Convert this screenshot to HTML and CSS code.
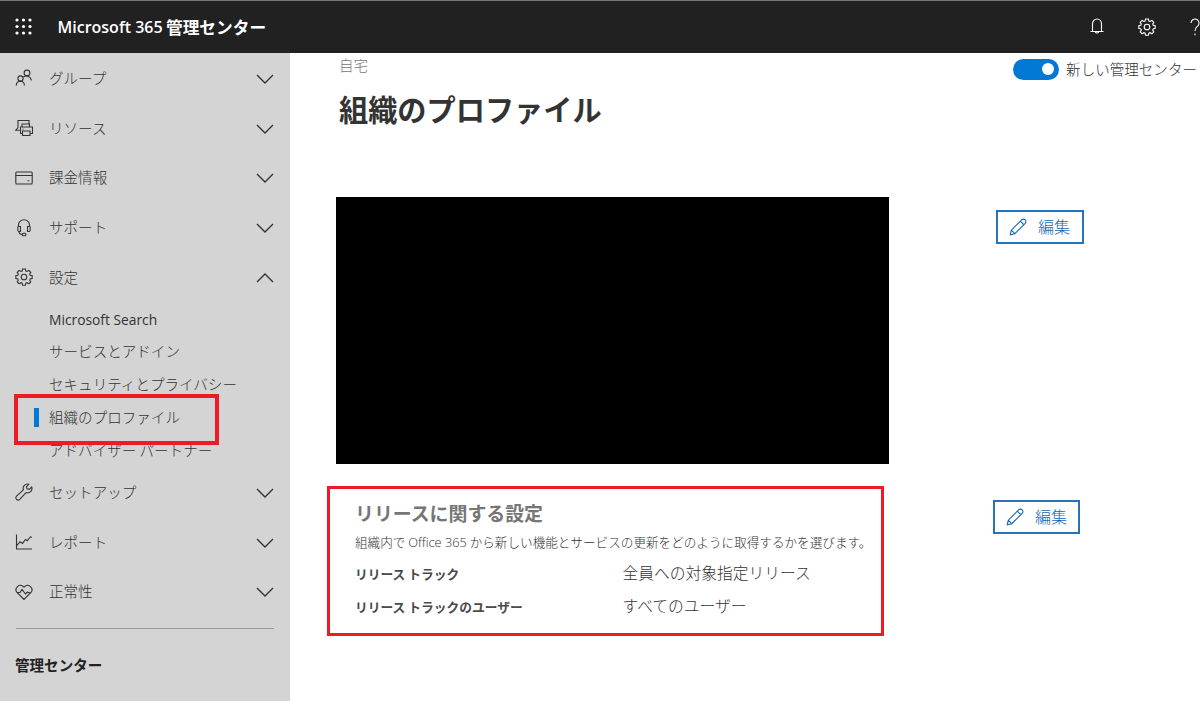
FILE: index.html
```html
<!DOCTYPE html>
<html lang="ja">
<head>
<meta charset="utf-8">
<title>Microsoft 365 管理センター</title>
<link rel="stylesheet" href="styles.css">
</head>
<body>
<svg width="0" height="0" class="defs">
  <defs>
    <symbol id="gear" viewBox="0 0 18 18"><path d="M7.6 1h2.8l.5 2 1.2.5 1.8-1.1 1.9 1.9-1.1 1.8.5 1.2 2 .5v2.6l-2 .5-.5 1.2 1.1 1.8-1.9 1.9-1.8-1.1-1.2.5-.5 2H7.6l-.5-2-1.2-.5-1.8 1.1-1.9-1.9 1.1-1.8-.5-1.2-2-.5V7.800l2-.5.5-1.200-1.100-1.800 1.900-1.900 1.800 1.100L7.100 3z"/><circle cx="9" cy="9" r="2.800"/></symbol>
    <symbol id="down" viewBox="0 0 18 10"><path d="M1 1l8 8 8-8"/></symbol>
    <symbol id="up" viewBox="0 0 18 10"><path d="M1 9l8-8 8 8"/></symbol>
    <symbol id="pencil" viewBox="0 0 18 18"><path d="M1.300 16.700l1-4.500L12.700 1.800a2.100 2.100 0 0 1 3.500 3.500L5.800 15.700zM2.300 12.200l3.500 3.500M11.300 3.200l3.500 3.500"/></symbol>
  </defs>
</svg>
<header class="topbar">
  <svg class="waffle" viewBox="0 0 17 17"><circle cx="2" cy="2" r="1.600"/><circle cx="8.500" cy="2" r="1.600"/><circle cx="15" cy="2" r="1.600"/><circle cx="2" cy="8.500" r="1.600"/><circle cx="8.500" cy="8.500" r="1.600"/><circle cx="15" cy="8.500" r="1.600"/><circle cx="2" cy="15" r="1.600"/><circle cx="8.500" cy="15" r="1.600"/><circle cx="15" cy="15" r="1.600"/></svg>
  <div class="brand"><span class="brand-latin">Microsoft 365</span><span>管理センター</span></div>
  <svg class="icon bell" viewBox="0 0 14 17"><path d="M.5 13.500h13M2.500 13.500V5.800a4.500 4.800 0 0 1 9 0v7.700M5.300 14a1.800 1.600 0 0 0 3.400 0"/></svg>
  <svg class="icon topgear"><use href="#gear"/></svg>
  <svg class="icon help" viewBox="0 0 10 18"><path d="M1 5a4 4 0 1 1 6.900 2.800C6.300 9.400 5 10.200 5 13M5 15.500v1.700"/></svg>
</header>
<div class="layout">
  <nav class="sidebar">
    <div class="row"><svg class="icon" viewBox="0 0 18 18"><circle cx="12" cy="4" r="2.900"/><circle cx="5.500" cy="9.500" r="2.600"/><path d="M1.300 16.500c0-5.700 8.100-5.700 8.100 0M8.300 8.100c2.200-2 7.400-1.400 8 3.400"/></svg><span>グループ</span><svg class="chev"><use href="#down"/></svg></div>
    <div class="row"><svg class="icon" viewBox="0 0 18 18"><path d="M3 8.500V1.500h11v3M3 8.500L.8 11.200h4M7 8V5h7.500v3M7 14.500H5.500V8h12v6.500h-2M7.500 12h7.500v4.500H7.500zM7.500 10.200h1"/></svg><span>リソース</span><svg class="chev"><use href="#down"/></svg></div>
    <div class="row"><svg class="icon" viewBox="0 0 18 18"><rect x=".8" y="3" width="16.400" height="12" rx="1"/><path d="M.8 6.500h16.400M12.500 11.800h1.800"/></svg><span>課金情報</span><svg class="chev"><use href="#down"/></svg></div>
    <div class="row"><svg class="icon" viewBox="0 0 18 18"><path d="M3.500 8V6a5.500 5.200 0 0 1 11 0v2M3.500 7.500h2v5H4.300a1.500 1.500 0 0 1-1.500-1.500V8zM14.500 7.500h-2v5h1.200a1.500 1.500 0 0 0 1.500-1.500V8zM4 12.500c0 2 1.200 3 3.500 3"/><rect x="7.300" y="14.300" width="3.600" height="2.400" rx="1"/></svg><span>サポート</span><svg class="chev"><use href="#down"/></svg></div>
    <div class="row"><svg class="icon"><use href="#gear"/></svg><span>設定</span><svg class="chev"><use href="#up"/></svg></div>
    <div class="subnav">
      <div class="sub latin">Microsoft Search</div>
      <div class="sub">サービスとアドイン</div>
      <div class="sub">セキュリティとプライバシー</div>
      <div class="sub current">組織のプロファイル</div>
      <div class="sub">アドバイザー パートナー</div>
      <div class="highlight"></div>
    </div>
    <div class="row"><svg class="icon" viewBox="0 0 18 18"><path d="M1.500 13.100l6.900-6.200a4.400 4.400 0 0 1 5.400-5.700L11.500 3.600l.5 2.200 2.200.5 2.500-2.300a4.400 4.400 0 0 1-5.700 5.600l-6.200 6.700a2.200 2.200 0 0 1-3.300-3.200z"/></svg><span>セットアップ</span><svg class="chev"><use href="#down"/></svg></div>
    <div class="row"><svg class="icon" viewBox="0 0 18 18"><path d="M1.500 1.500v14.500h15.500M2 12.300l3-3.600 2.500 1.700 3-4 1.700 1.300 3.500-4 1 1"/></svg><span>レポート</span><svg class="chev"><use href="#down"/></svg></div>
    <div class="row"><svg class="icon" viewBox="0 0 18 18"><path d="M9 16.500L2 9.500C-1.300 5.500 4.500-.6 9 4.200c4.500-4.800 10.300 1.300 7 5.300zM2 9.500h3l2-3 3.500 4.500 2-2 .8.700H16"/></svg><span>正常性</span><svg class="chev"><use href="#down"/></svg></div>
    <div class="divider"></div>
    <div class="nav-heading">管理センター</div>
  </nav>
  <main class="content">
    <div class="page-head">
      <div>
        <div class="crumb">自宅</div>
        <h1 class="title">組織のプロファイル</h1>
      </div>
      <div class="switch"><span class="track"><span class="knob"></span></span><span class="switch-label">新しい管理センター</span></div>
    </div>
    <div class="profile">
      <div class="redacted"></div>
      <button class="edit"><svg class="icon"><use href="#pencil"/></svg><span>編集</span></button>
    </div>
    <div class="release">
      <section class="panel">
        <h2 class="panel-title">リリースに関する設定</h2>
        <p class="desc">組織内で <span class="office">Office 365</span> から新しい機能とサービスの更新をどのように取得するかを選びます。</p>
        <div class="field"><span class="label">リリース トラック</span><span class="value">全員への対象指定リリース</span></div>
        <div class="field"><span class="label">リリース トラックのユーザー</span><span class="value">すべてのユーザー</span></div>
      </section>
      <button class="edit edit-release"><svg class="icon"><use href="#pencil"/></svg><span>編集</span></button>
    </div>
  </main>
</div>
</body>
</html>
```
FILE: styles.css
```css
* { box-sizing: border-box; }
body {
  margin: 0;
  width: 1200px;
  height: 701px;
  overflow: hidden;
  background: #fff;
  color: #333;
  font-family: "Noto Sans CJK JP", sans-serif;
  font-size: 14.56px;
  font-weight: 300;
  white-space: nowrap;
}
.defs { display: block; position: absolute; }
.icon {
  flex: none;
  width: 18px;
  height: 18px;
  fill: none;
  stroke: currentColor;
  stroke-width: 1.1;
}
.topbar {
  display: flex;
  align-items: center;
  height: 53px;
  padding: 0 0 1px 15px;
  border-top: 1px solid #777;
  background: #212121;
  color: #fff;
  overflow: hidden;
}
.waffle { width: 17px; height: 17px; fill: #fff; flex: none; }
.brand {
  display: flex;
  align-items: center;
  width: 1031px;
  margin-left: 25.5px;
  font-size: 16.7px;
  font-weight: 700;
  flex: none;
}
.brand-latin {
  width: 108.5px;
  padding-top: 1px;
  font-family: "Open Sans", sans-serif;
  font-size: 16px;
  font-weight: 600;
}
.bell { width: 14px; height: 17px; margin-left: 1px; }
.topgear { margin-left: 34px; }
.help { width: 10px; margin-left: 34.5px; }
.layout { display: flex; height: 648px; }
.sidebar { width: 290px; flex: none; padding-top: 0.4px; background: #d4d4d4; }
.row {
  display: flex;
  align-items: center;
  height: 49.8px;
  padding: 0 16px 0 15px;
}
.row span { flex: 1; margin-left: 16px; padding-bottom: 2px; }
.chev {
  width: 18px;
  height: 10px;
  margin-top: 1px;
  fill: none;
  stroke: #333;
  stroke-width: 1.4;
}
.subnav { position: relative; padding-left: 49px; }
.sub { height: 33px; line-height: 31px; }
.latin {
  padding-top: 2px;
  font-family: "Open Sans", "Noto Sans", sans-serif;
  font-size: 13.8px;
  font-weight: 400;
}
.current { position: relative; }
.current::before {
  content: "";
  position: absolute;
  left: -15px;
  top: 7px;
  width: 5px;
  height: 19px;
  background: #0078d4;
}
.highlight {
  position: absolute;
  left: 14px;
  top: 91.6px;
  width: 205px;
  height: 51px;
  border: 4px solid #ed1c24;
}
.divider { height: 1px; margin: 11px 16px 0; background: #999; }
.nav-heading { margin: 19px 0 0 15px; line-height: 34px; font-weight: 700; color: #222; }
.content { flex: 1; min-width: 0; padding-left: 37px; }
.page-head { display: flex; justify-content: space-between; height: 144px; padding-left: 12px; }
.crumb { height: 25px; line-height: 23px; color: #777; }
.title { margin: 8px 0 0; font-size: 29.2px; line-height: 44px; font-weight: 700; }
.switch { display: flex; align-items: center; gap: 7px; height: 32px; padding-right: 3px; }
.switch-label { padding-bottom: 2px; }
.track {
  display: flex;
  justify-content: flex-end;
  align-items: center;
  width: 46px;
  height: 21px;
  padding-right: 5px;
  border-radius: 11px;
  background: #0078d4;
}
.knob { width: 12px; height: 12px; border-radius: 50%; background: #fff; }
.profile { display: flex; align-items: flex-start; padding-left: 9px; }
.redacted { width: 553px; height: 267px; background: #000; }
.edit {
  display: flex;
  align-items: center;
  gap: 11px;
  width: 88px;
  height: 34px;
  margin: 13px 0 0 107px;
  padding: 0 0 0 11px;
  border: 2px solid #2673b8;
  background: #fff;
  color: #1267b4;
  font: inherit;
  font-size: 16px;
}
.edit span { padding-bottom: 3px; }
.edit .icon { margin-top: -1px; }
.release { display: flex; align-items: flex-start; margin-top: 22px; }
.panel {
  width: 557px;
  height: 150px;
  padding: 9px 0 0 25px;
  border: 3px solid #ed1c24;
}
.edit-release { margin: 14px 0 0 109px; width: 87px; }
.panel-title { margin: 0; font-size: 18.9px; line-height: 30px; font-weight: 700; color: #767676; }
.desc { margin: 0; font-size: 12.6px; line-height: 28px; }
.office { font-family: "Open Sans", sans-serif; font-size: 12.8px; }
.field { display: flex; align-items: center; height: 33px; }
.label { width: 267.500px; padding-top: 1px; font-size: 12.75px; font-weight: 700; color: #4a4a4a; }
.value { font-size: 15.75px; }
```
